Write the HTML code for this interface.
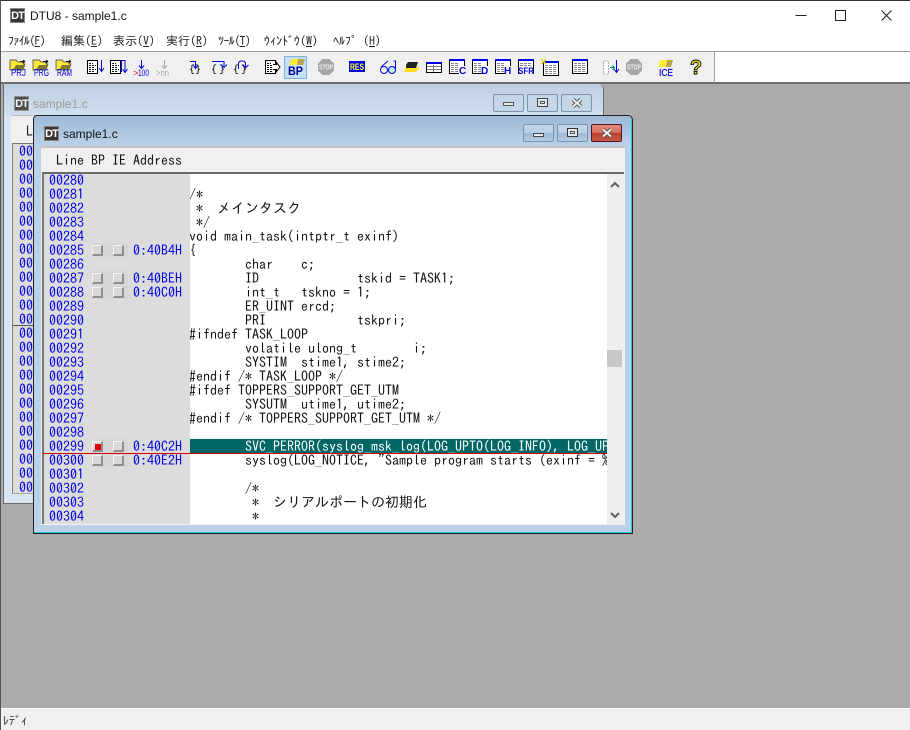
<!DOCTYPE html>
<html><head><meta charset="utf-8">
<style>
*{box-sizing:border-box;margin:0;padding:0}
html,body{width:910px;height:730px;overflow:hidden;background:#ababab}
.a{position:absolute}
body{font-family:"Liberation Sans","IPAGothic",sans-serif}
.m{font-family:"IPAGothic","Liberation Mono",monospace;font-size:14px;line-height:14px;white-space:pre}
.menu{position:absolute;top:35px;font:12px/12px "IPAGothic","Liberation Sans",sans-serif;color:#222;white-space:pre}
.menu u{text-underline-offset:1px}
.dt{position:absolute;width:15px;height:15px;background:#3a3632;color:#fff;font:bold 11px/15px "Liberation Sans",sans-serif;text-align:center;letter-spacing:-1px;border:1px solid #8a857d}
.wb{position:absolute;height:18px;width:31px;border:1px solid #7f93ad;border-radius:2px;background:linear-gradient(#c5d8ea 0,#b9cfe6 50%,#9db9d5 52%,#b5cce3 100%)}
.cb{position:absolute;width:11px;height:11px;background:#d8d8d8;border-top:1px solid #f4f4f4;border-left:1px solid #f4f4f4;border-right:2px solid #8e8e8e;border-bottom:2px solid #8e8e8e}
.x{position:absolute;left:9px;top:3px}
</style></head><body>

<!-- main chrome -->
<div class="a" style="left:0;top:0;width:910px;height:52px;background:#fff;border-top:1px solid #333"></div>
<div class="a" style="left:0;top:0;width:1px;height:730px;background:#555"></div>
<div class="dt" style="left:10px;top:8px">DT</div>
<div class="a" style="left:30px;top:8px;font-size:12px;line-height:16px;color:#111">DTU8 - sample1.c</div>
<svg class="a" style="left:780px;top:0" width="130" height="30" fill="none" stroke="#222">
<path d="M15.500 15.500h11" shape-rendering="crispEdges"/>
<rect x="55.500" y="10.500" width="10" height="10"/>
<path d="M101.500 10.500l10 10M111.500 10.500l-10 10"/>
</svg>

<div class="menu" style="left:8px;letter-spacing:-.7px">ﾌｧｲﾙ(<u>F</u>)</div>
<div class="menu" style="left:61px">編集(<u>E</u>)</div>
<div class="menu" style="left:113px">表示(<u>V</u>)</div>
<div class="menu" style="left:166px">実行(<u>R</u>)</div>
<div class="menu" style="left:218px;letter-spacing:-.6px">ﾂｰﾙ(<u>T</u>)</div>
<div class="menu" style="left:264px">ｳｨﾝﾄﾞｳ(<u>W</u>)</div>
<div class="menu" style="left:333px">ﾍﾙﾌﾟ (<u>H</u>)</div>

<!-- toolbar -->
<div class="a" style="left:1px;top:51px;width:909px;height:33px;background:#f0f0f0;border-top:1px solid #a0a0a0;border-bottom:2px solid #6e6e6e"></div>
<div class="a" style="left:714px;top:52px;width:196px;height:32px;background:#fff;border-left:1px solid #a0a0a0;border-bottom:2px solid #6e6e6e"></div>
<div class="a" style="left:284px;top:56px;width:23px;height:23px;background:#c4e0f6;border:1px solid #7db4e4"></div>

<svg class="a" style="left:0;top:0" width="720" height="84" font-family="Liberation Sans,sans-serif">
<defs>
<g id="fo"><path d="M0 0h6l2 2h5v2h2l-2 6H0z" fill="#ffe83a" stroke="#333" stroke-width=".7"/><path d="M3 10l3-5h9l-2 5z" fill="#7d7a2d"/><path d="M10 1.500h5m0 0l-2-1.500m2 1.500l-2 1.500" stroke="#111" fill="none"/></g>
<g id="doc"><rect x=".5" y=".5" width="10" height="13" fill="#fff" stroke="#000"/><path d="M2 3.500h4M2 5.500h7M2 7.500h6M2 9.500h7M2 11.500h5" stroke="#111" stroke-dasharray="2 1" fill="none"/></g>
<g id="tb"><rect x=".5" y=".5" width="15" height="14" fill="#fff" stroke="#000"/><rect x="0" y="0" width="16" height="2" fill="#0000e0"/><path d="M2 4.500h12M2 6.500h12M2 8.500h12M2 10.500h12M2 12.500h12" stroke="#888" stroke-dasharray="3 1" fill="none"/></g>
<g id="tl"><rect x=".5" y=".5" width="15" height="14" fill="#fff" stroke="#000"/><rect x="0" y="0" width="16" height="2" fill="#0000e0"/><path d="M2 4.500h8M2 6.500h8M2 8.500h8M2 10.500h8M2 12.500h8" stroke="#888" stroke-dasharray="3 1" fill="none"/></g>
<g id="st"><path d="M-3.500-8h7L8-3.500v7L3.500 8h-7L-8 3.500v-7z" fill="#a6a6a6"/><text x="0" y="2.500" text-anchor="middle" font-size="7" font-weight="bold" fill="#eee" textLength="14" lengthAdjust="spacingAndGlyphs">STOP</text></g>
</defs>

<use href="#fo" x="10" y="60"/><text x="11" y="76" font-size="10" fill="#0000e0" textLength="15" lengthAdjust="spacingAndGlyphs">PRJ</text>
<use href="#fo" x="33" y="60"/><text x="34" y="76" font-size="10" fill="#0000e0" textLength="15" lengthAdjust="spacingAndGlyphs">PRG</text>
<use href="#fo" x="56" y="60"/><text x="57" y="76" font-size="10" fill="#0000e0" textLength="15" lengthAdjust="spacingAndGlyphs">RAM</text>

<use href="#doc" x="87" y="60"/><path d="M101.500 60v11m-2.500-3l2.500 3.500 2.500-3.500" stroke="#0000e0" fill="none"/>
<use href="#doc" x="110" y="60"/><path d="M121.500 72V60.500h3.500V72m-2.500-3l2.500 3.500 2.500-3.500" stroke="#0000e0" fill="none"/>
<path d="M141.500 60v8m-2.500-2.500l2.500 3 2.500-3" stroke="#0000e0" fill="none"/>
<text x="133" y="76" font-size="9" fill="#e00000">&gt;</text><text x="138" y="76" font-size="9" fill="#0000e0" textLength="11" lengthAdjust="spacingAndGlyphs">100</text>
<path d="M164.500 60v8m-2.500-2.500l2.500 3 2.500-3" stroke="#aaa" fill="none"/>
<text x="156" y="76" font-size="9" fill="#aaa" textLength="13" lengthAdjust="spacingAndGlyphs">&gt;nn</text>

<g font-family="Liberation Mono" font-size="10" fill="#000">
<text x="189" y="72">{</text><text x="195" y="72">}</text>
<text x="211" y="72">{</text><text x="219" y="72">}</text>
<text x="233" y="72">{</text><text x="241" y="72">}</text>
</g>
<path d="M190 61.500h6M195.500 61v7m-2-2.500l2 3 2-3" stroke="#0000e0" fill="none"/>
<path d="M212 61.500h12V66m-3-1.500l3 3 3-3" stroke="#0000e0" fill="none"/>
<path d="M238.500 69v-5q0-3 3-3h1q3 0 3 3v3m-3-2l3 3 3-3" stroke="#0000e0" fill="none"/>

<use href="#doc" x="265" y="60"/><path d="M273 64.500h3.500v-2l3.500 4.500-3.500 4.500v-2H273" fill="#fff" stroke="#000"/>

<path d="M290 62l2-3h13l-2 6h-13z" fill="#ffee30"/><path d="M298 59h7l-2 6h-6z" fill="#b9a850"/>
<text x="288" y="75" font-size="12" font-weight="bold" fill="#000090" textLength="15" lengthAdjust="spacingAndGlyphs">BP</text>
<use href="#st" x="326" y="67"/>
<rect x="349" y="61" width="16" height="11" fill="#0000e0"/><text x="350" y="70" font-size="9.500" font-weight="bold" fill="#ffff20" textLength="14" lengthAdjust="spacingAndGlyphs">RES</text>

<g fill="none" stroke="#0000e0"><circle cx="384" cy="70" r="3.500"/><circle cx="392" cy="70" r="3.500" fill="#c8f0f0"/><path d="M381 67l7-6M395.500 69V61h-2"/></g>
<path d="M406 65l2-3h10l-2 6h-10z" fill="#222"/><path d="M405 68h12l3-3-2 5-2 2h-12z" fill="#ffe020"/>

<rect x="426.500" y="62.500" width="15" height="10" fill="#fff" stroke="#000"/><rect x="426" y="62" width="16" height="2" fill="#0000e0"/><path d="M427 66.500h14M427 69.500h14M433.500 65v7" stroke="#777" fill="none"/>
<use href="#tl" x="449" y="59"/><rect x="459" y="66" width="6" height="8" fill="#fff"/><text x="459" y="74" font-size="10" font-weight="bold" fill="#0000e0">C</text>
<use href="#tl" x="472" y="59"/><rect x="482" y="66" width="6" height="8" fill="#fff"/><text x="481" y="74" font-size="10" font-weight="bold" fill="#0000e0">D</text>
<use href="#tl" x="495" y="59"/><rect x="505" y="66" width="6" height="8" fill="#fff"/><text x="504" y="74" font-size="10" font-weight="bold" fill="#0000e0">H</text>
<use href="#tb" x="518" y="59"/><rect x="519" y="66" width="14" height="8" fill="#fff"/><text x="518" y="74" font-size="9.500" font-weight="bold" fill="#0000e0" textLength="16" lengthAdjust="spacingAndGlyphs">SFR</text>
<use href="#tb" x="543" y="61"/><path d="M541 59l5 5m0-5l-5 5" stroke="#e6d820" stroke-width="1.500"/>
<use href="#tb" x="572" y="59"/>

<path d="M603.500 61h5v13h-5z" fill="#fff" stroke="#aaa" stroke-dasharray="2 1"/>
<path d="M610 67.500h4m-1.500-2l2 2-2 2" stroke="#008080" fill="none"/>
<path d="M616.500 60v12m-2.500-3l2.500 3.500 2.500-3.500" stroke="#0000e0" fill="none"/>
<use href="#st" x="634" y="67"/>
<path d="M659 63l2-3h12l-2 7h-12z" fill="#ffee30"/><path d="M667 60h6l-2 7h-5z" fill="#b9a850"/>
<text x="659" y="76" font-size="10" fill="#0000e0" stroke="#0000e0" stroke-width=".2" textLength="14" lengthAdjust="spacingAndGlyphs">ICE</text>
<text x="696" y="74" text-anchor="middle" font-size="20" font-weight="bold" fill="#ffe820" stroke="#000" stroke-width=".9">?</text>
</svg>

<!-- status bar -->
<div class="a" style="left:1px;top:708px;width:909px;height:22px;background:#f0f0f0;border-top:1px solid #fff"></div>
<div class="a" style="left:3px;top:714px;font:12px/14px 'IPAGothic',sans-serif;color:#334">ﾚﾃﾞｨ</div>

<!-- back window -->
<div class="a" style="left:3px;top:84px;width:601px;height:420px;background:#d8e6f3;border:1px solid #6b6b6b;border-top:none;border-radius:0 6px 0 0;overflow:hidden">
 <div class="a" style="left:0;top:0;width:600px;height:31px;background:linear-gradient(#bccfe2,#cfdfee)"></div>
 <div class="a" style="left:7px;top:31px;width:585px;height:378px;background:#f0f0f0;border-top:1px solid #bbb"></div>
 <div class="a" style="left:8px;top:59px;width:30px;height:351px;background:#dcdcdc;border:1px solid #777;border-right:none;border-bottom:1px solid #aaa"></div>
 <div class="a" style="left:9px;top:241px;width:30px;height:2px;border-top:1px solid #555"></div>
 <div class="a m" style="left:15px;top:60px;color:#0000e6">00
00
00
00
00
00
00
00
00
00
00
00
00
00
00
00
00
00
00
00
00
00
00
00
00</div>
 <div class="a m" style="left:22px;top:40px;color:#222">L</div>
</div>
<div class="dt" style="left:14px;top:96px;opacity:.85">DT</div>
<div class="a" style="left:33px;top:96px;font-size:12px;line-height:16px;color:#9a9a9a">sample1.c</div>
<div class="wb" style="left:493px;top:94px;background:#c4d7e9"><div class="a" style="left:9px;top:7px;width:11px;height:4px;background:#e8e8e8;border:1px solid #555"></div></div>
<div class="wb" style="left:527px;top:94px;background:#c4d7e9"><div class="a" style="left:9px;top:3px;width:11px;height:9px;background:#dfe6ee;border:1px solid #444"><div class="a" style="left:2px;top:2px;width:5px;height:3px;border:1px solid #555"></div></div></div>
<div class="wb" style="left:561px;top:94px;background:#c4d7e9"><svg class="x" width="12" height="10"><path d="M2 1.500l8 7M10 1.500l-8 7" stroke="#555" stroke-width="4"/><path d="M2 1.500l8 7M10 1.500l-8 7" stroke="#eee" stroke-width="2"/></svg></div>

<!-- front window -->
<div class="a" style="left:33px;top:115px;width:600px;height:419px;background:#bad1ea;border:1px solid #222;border-radius:4px 5px 0 0;box-shadow:inset -1px -1px 0 #1fc8d8">
 <div class="a" style="left:0;top:0;width:597px;height:31px;background:linear-gradient(#9db9d7,#bcd2e8);border-radius:3px 4px 0 0"></div>
</div>
<div class="dt" style="left:44px;top:126px">DT</div>
<div class="a" style="left:63px;top:126px;font-size:12px;line-height:16px;color:#111">sample1.c</div>
<div class="wb" style="left:523px;top:124px"><div class="a" style="left:9px;top:8px;width:11px;height:4px;background:#eee;border:1px solid #444"></div></div>
<div class="wb" style="left:557px;top:124px"><div class="a" style="left:9px;top:3px;width:11px;height:9px;background:#dfe6ee;border:1px solid #333"><div class="a" style="left:2px;top:2px;width:5px;height:3px;border:1px solid #555"></div></div></div>
<div class="wb" style="left:591px;top:124px;border-color:#5a1020;background:linear-gradient(#e08a7c 0,#d9705f 48%,#b5402c 52%,#c65a48 100%)"><svg class="x" width="12" height="10"><path d="M2 1.500l8 7M10 1.500l-8 7" stroke="#555" stroke-width="4"/><path d="M2 1.500l8 7M10 1.500l-8 7" stroke="#eee" stroke-width="2"/></svg></div>

<!-- client -->
<div class="a" style="left:41px;top:146px;width:584px;height:379px;background:#f0f0f0;border-top:2px solid #c4c4c4"></div>
<div class="a m" style="left:56px;top:153px;color:#111">Line BP IE Address</div>
<div class="a" style="left:42px;top:172px;width:582px;height:352px;background:#fff;border-top:2px solid #6a6a6a;border-left:2px solid #777"></div>
<div class="a" style="left:44px;top:174px;width:146px;height:350px;background:#dcdcdc"></div>
<div class="a" style="left:607px;top:174px;width:17px;height:350px;background:#efefef"></div>
<div class="a" style="left:607px;top:350px;width:15px;height:17px;background:#c8c8c8"></div>
<svg class="a" style="left:607px;top:174px" width="17" height="350" fill="none" stroke="#606060" stroke-width="2"><path d="M4 13l4-4 4 4M4 339l4 4 4-4"/></svg>

<div class="a" style="left:92px;top:243px;width:36px;height:14px;background:#d6d6d6"></div>
<div class="a" style="left:92px;top:271px;width:36px;height:28px;background:#d6d6d6"></div>
<div class="a" style="left:92px;top:439px;width:36px;height:28px;background:#d6d6d6"></div>
<div class="cb" style="left:92px;top:245px"></div><div class="cb" style="left:113px;top:245px"></div>
<div class="cb" style="left:92px;top:273px"></div><div class="cb" style="left:113px;top:273px"></div>
<div class="cb" style="left:92px;top:287px"></div><div class="cb" style="left:113px;top:287px"></div>
<div class="cb" style="left:92px;top:441px"><div class="a" style="left:2px;top:2px;width:6px;height:6px;background:#e00000"></div></div><div class="cb" style="left:113px;top:441px"></div>
<div class="cb" style="left:92px;top:455px"></div><div class="cb" style="left:113px;top:455px"></div>

<div class="a m" style="left:49px;top:173px;color:#0000e6">00280
00281
00282
00283
00284
00285
00286
00287
00288
00289
00290
00291
00292
00293
00294
00295
00296
00297
00298
00299
00300
00301
00302
00303
00304</div>
<div class="a m" style="left:133px;top:243px;color:#0000e6">0:40B4H

0:40BEH
0:40C0H</div>
<div class="a m" style="left:133px;top:439px;color:#0000e6">0:40C2H
0:40E2H</div>

<div class="a" style="left:190px;top:439px;width:417px;height:14px;background:#006666"></div>
<div class="a" style="left:190px;top:173px;width:417px;height:350px;overflow:hidden">
<div class="a m" style="left:-1px;top:0;color:#111">
/*
 *  メインタスク
 */
void main_task(intptr_t exinf)
{
        char    c;
        ID              tskid = TASK1;
        int_t   tskno = 1;
        ER_UINT ercd;
        PRI             tskpri;
#ifndef TASK_LOOP
        volatile ulong_t        i;
        SYSTIM  stime1, stime2;
#endif /* TASK_LOOP */
#ifdef TOPPERS_SUPPORT_GET_UTM
        SYSUTM  utime1, utime2;
#endif /* TOPPERS_SUPPORT_GET_UTM */

        <span style="color:#fff">SVC_PERROR(syslog_msk_log(LOG_UPTO(LOG_INFO), LOG_UPTO(LOG_EMERG)));</span>
        syslog(LOG_NOTICE, "Sample program starts (exinf = %d).", (int_t) exinf);

        /*
         *  シリアルポートの初期化
         *</div>
</div>
<div class="a" style="left:43px;top:453px;width:564px;height:1px;background:#d80000"></div>
</body></html>
